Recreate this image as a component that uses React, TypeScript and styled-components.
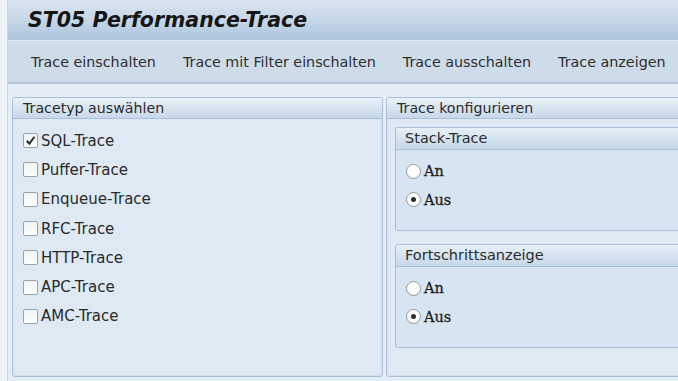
import React from 'react';
import styled, { createGlobalStyle } from 'styled-components';

const GlobalStyle = createGlobalStyle`
    html, body {
        margin: 0;
        padding: 0;
        overflow: hidden;
        background: #eef3f8;
    }
`;

const Screen = styled.div`
    width: 678px;
    height: 381px;
    display: flex;
    overflow: hidden;
    background: #eef3f8;
    font-family: 'DejaVu Sans', Verdana, sans-serif;
    color: #2a2a2a;
`;

const Frame = styled.div`
    flex: 1;
    min-width: 0;
    margin-left: 7px;
    border-left: 1px solid #cdd9e5;
    display: flex;
    flex-direction: column;
    background: #e5edf6;
`;

const TitleBar = styled.div`
    height: 40px;
    flex-shrink: 0;
    display: flex;
    align-items: center;
    padding-left: 20px;
    background: linear-gradient(to bottom, #dae5f0 0%, #c6d7e8 50%, #adc5dd 100%);
`;

const Title = styled.h1`
    margin: 0;
    font-size: 20.5px;
    font-weight: bold;
    font-style: italic;
    color: #161616;
    white-space: nowrap;
`;

const Toolbar = styled.div`
    height: 41px;
    flex-shrink: 0;
    display: flex;
    align-items: center;
    gap: 27px;
    padding-left: 23px;
    background: #cedcea;
    border-top: 1px solid #e2eaf3;
    border-bottom: 2px solid #b4c4d4;
`;

const ToolButton = styled.span`
    font-size: 14.3px;
    color: #2e2e2e;
    white-space: nowrap;
    cursor: pointer;
`;

const Content = styled.div`
    flex: 1;
    display: flex;
    gap: 3px;
    padding: 13px 0 0 4px;
`;

const Panel = styled.div<{ $width: number }>`
    width: ${({ $width }) => $width}px;
    height: 280px;
    flex-shrink: 0;
    box-sizing: border-box;
    border: 1px solid #a9c0d8;
    border-radius: 3px;
    box-shadow: inset 0 0 0 1px #d3e0ed;
    background: #dee9f4;
    display: flex;
    flex-direction: column;
`;

const PanelHeader = styled.div`
    height: 20px;
    line-height: 20px;
    padding-left: 10px;
    font-size: 14.2px;
    color: #2b2b2b;
    white-space: nowrap;
    border-bottom: 1px solid #a9c0d8;
    border-radius: 2px 2px 0 0;
    background: linear-gradient(to bottom, #eaf1f8 0%, #d6e3f0 55%, #c7d8ea 100%);
`;

const CheckList = styled.div`
    display: flex;
    flex-direction: column;
    padding: 7px 0 0 10px;
`;

const OptionRow = styled.label<{ $height: number }>`
    height: ${({ $height }) => $height}px;
    display: flex;
    align-items: center;
    gap: 3px;
    font-size: 15px;
    color: #2a2a2a;
    white-space: nowrap;
`;

const Box = styled.span`
    width: 15px;
    height: 15px;
    box-sizing: border-box;
    border: 1px solid #9aa3ad;
    border-radius: 2px;
    background: linear-gradient(to bottom, #f1f3f5, #ffffff);
    display: flex;
    align-items: center;
    justify-content: center;
`;

const Groups = styled.div`
    display: flex;
    flex-direction: column;
    gap: 13px;
    padding: 8px 0 0 8px;
`;

const Group = styled.div`
    height: 104px;
    box-sizing: border-box;
    border: 1px solid #a9c0d8;
    border-radius: 3px;
    background: #d7e5f2;
    display: flex;
    flex-direction: column;
`;

const GroupHeader = styled.div`
    height: 21px;
    line-height: 21px;
    padding-left: 9px;
    font-size: 14.5px;
    color: #2b2b2b;
    white-space: nowrap;
    border-bottom: 1px solid #a9c0d8;
    border-radius: 2px 2px 0 0;
    background: linear-gradient(to bottom, #e7eff7 0%, #d4e2ef 55%, #c6d8ea 100%);
`;

const RadioList = styled.div`
    display: flex;
    flex-direction: column;
    padding: 7px 0 0 10px;
`;

const RadioCircle = styled.span<{ $on: boolean }>`
    width: 15px;
    height: 15px;
    box-sizing: border-box;
    border: 1px solid #999999;
    border-radius: 50%;
    background: radial-gradient(circle at 50% 40%, #ffffff 55%, #e4e7ea 100%);
    display: flex;
    align-items: center;
    justify-content: center;

    &::after {
        content: '';
        display: ${({ $on }) => ($on ? 'block' : 'none')};
        width: 5px;
        height: 5px;
        border-radius: 50%;
        background: #2c2c2c;
    }
`;

const RadioText = styled.span`
    font-family: 'DejaVu Serif', serif;
    font-size: 14.5px;
    color: #1e1e1e;
    -webkit-text-stroke: 0.3px #1e1e1e;
`;

const Check = () => (
    <svg width="11" height="11" viewBox="0 0 10 10">
        <path d="M1.6 5.2 L4 7.8 L8.6 1.6" fill="none" stroke="#2b2b2b" strokeWidth="1.8" />
    </svg>
);

const traceTypes = [
    { label: 'SQL-Trace', checked: true },
    { label: 'Puffer-Trace', checked: false },
    { label: 'Enqueue-Trace', checked: false },
    { label: 'RFC-Trace', checked: false },
    { label: 'HTTP-Trace', checked: false },
    { label: 'APC-Trace', checked: false },
    { label: 'AMC-Trace', checked: false },
];

const configGroups = [
    { title: 'Stack-Trace', value: 'Aus' },
    { title: 'Fortschrittsanzeige', value: 'Aus' },
];

const toolbarActions = [
    'Trace einschalten',
    'Trace mit Filter einschalten',
    'Trace ausschalten',
    'Trace anzeigen',
];

const RadioGroup = ({ title, value }: { title: string; value: string }) => (
    <Group>
        <GroupHeader>{title}</GroupHeader>
        <RadioList>
            {['An', 'Aus'].map(opt => (
                <OptionRow key={opt} $height={28.5}>
                    <RadioCircle $on={opt === value} />
                    <RadioText>{opt}</RadioText>
                </OptionRow>
            ))}
        </RadioList>
    </Group>
);

export default function App() {
    return (
        <>
            <GlobalStyle />
            <Screen>
                <Frame>
                    <TitleBar>
                        <Title>ST05 Performance-Trace</Title>
                    </TitleBar>
                    <Toolbar>
                        {toolbarActions.map(a => (
                            <ToolButton key={a}>{a}</ToolButton>
                        ))}
                    </Toolbar>
                    <Content>
                        <Panel $width={371}>
                            <PanelHeader>Tracetyp auswählen</PanelHeader>
                            <CheckList>
                                {traceTypes.map(t => (
                                    <OptionRow key={t.label} $height={29.3}>
                                        <Box>{t.checked && <Check />}</Box>
                                        {t.label}
                                    </OptionRow>
                                ))}
                            </CheckList>
                        </Panel>
                        <Panel $width={340}>
                            <PanelHeader>Trace konfigurieren</PanelHeader>
                            <Groups>
                                {configGroups.map(g => (
                                    <RadioGroup key={g.title} title={g.title} value={g.value} />
                                ))}
                            </Groups>
                        </Panel>
                    </Content>
                </Frame>
            </Screen>
        </>
    );
}
